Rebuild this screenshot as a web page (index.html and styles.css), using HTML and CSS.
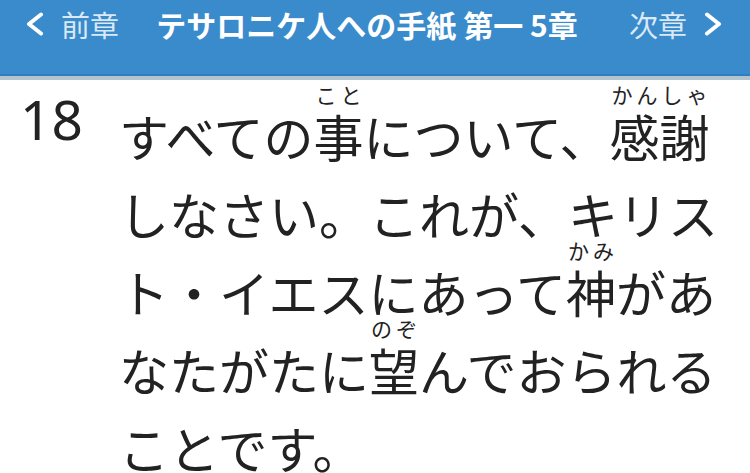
FILE: index.html
```html
<!DOCTYPE html>
<html lang="ja">
<head>
<meta charset="utf-8">
<title>テサロニケ人への手紙 第一 5章</title>
<link rel="stylesheet" href="styles.css">
</head>
<body>
<header class="nav">
  <div class="nav-row">
    <a class="nav-btn prev" href="#">
      <svg class="chev" viewBox="0 0 18 24" width="18" height="24"><path d="M15 2.5 L3 12 L15 21.5" /></svg>
      <span>前章</span>
    </a>
    <h1 class="title">テサロニケ人への手紙 第一 5章</h1>
    <a class="nav-btn next" href="#">
      <span>次章</span>
      <svg class="chev" viewBox="0 0 18 24" width="18" height="24"><path d="M3 2.5 L15 12 L3 21.5" /></svg>
    </a>
  </div>
</header>
<main class="verse">
  <span class="num">18</span>
  <p class="text">すべての<ruby>事<rt>こと</rt></ruby>について、<ruby>感謝<rt>かんしゃ</rt></ruby>しなさい。これが、キリスト・イエスにあって<ruby>神<rt>かみ</rt></ruby>があなたがたに<ruby>望<rt>のぞ</rt></ruby>んでおられることです。</p>
</main>
</body>
</html>
```
FILE: styles.css
```css
html, body {
  margin: 0;
  padding: 0;
  background: #ffffff;
}
body {
  width: 750px;
  height: 473px;
  overflow: hidden;
  font-family: "Noto Sans CJK JP", "Noto Sans", sans-serif;
  color: #222222;
}
.nav {
  background: #3a8bcb;
  height: 74px;
  border-bottom: 2px solid #2f7ec0;
  box-shadow: 0 4px 0 #b4c4cf;
}
.nav-row {
  height: 48px;
  display: flex;
  align-items: center;
  justify-content: space-between;
  padding: 0 28px 0 26px;
}
.nav-btn {
  display: flex;
  align-items: center;
  gap: 17px;
  color: rgba(255, 255, 255, 0.82);
  text-decoration: none;
  font-size: 29px;
  line-height: 1;
}
.chev {
  fill: none;
  stroke: #ffffff;
  stroke-width: 4;
  stroke-linecap: round;
  stroke-linejoin: round;
}
.title {
  margin: 0 14px 0 0;
  color: #ffffff;
  font-size: 30px;
  font-weight: 700;
  line-height: 1;
  white-space: nowrap;
}
.verse {
  display: flex;
  align-items: flex-start;
  padding: 15px 0 0 20px;
}
.num {
  width: 99px;
  flex: none;
  font-family: "Noto Sans", sans-serif;
  font-size: 55px;
  line-height: 55px;
}
.text {
  margin: 0;
  width: 602px;
  font-size: 50px;
  line-height: 78px;
  text-spacing-trim: space-all;
}
rt {
  position: relative;
  top: -7px;
  font-size: 21px;
  line-height: 1;
}
```
